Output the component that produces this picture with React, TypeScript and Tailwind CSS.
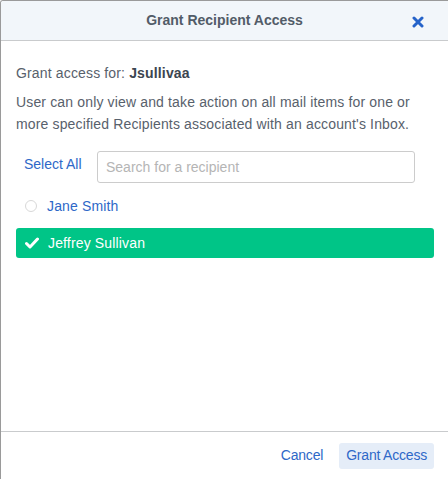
import React from "react";

export default function App() {
  return (
    <div
      className="w-[448px] h-[479px] bg-white border-l border-t border-[#9a9a9a] rounded-tl-[3px] flex flex-col overflow-hidden"
      style={{ fontFamily: '"Liberation Sans", Arial, sans-serif' }}
    >
      <div className="h-[40px] shrink-0 bg-[#f2f6fa] border-b border-[#c9cbcd] relative flex items-center justify-center">
        <span className="text-[14px] font-bold text-[#525c68]">Grant Recipient Access</span>
        <svg
          className="absolute left-[411px] top-[15px]"
          width="12"
          height="12"
          viewBox="0 0 12 12"
        >
          <path d="M2 2 L10 10 M10 2 L2 10" stroke="#2663c9" strokeWidth="3" strokeLinecap="round" />
        </svg>
      </div>
      <div className="flex-1 px-[15px] pt-[23px] text-[14px] text-[#58616c] tracking-[0.15px]">
        <div className="leading-[18px]">
          Grant access for: <span className="font-bold text-[#3c4550]">Jsullivaa</span>
        </div>
        <div className="mt-[9px] leading-[22px]">
          User can only view and take action on all mail items for one or more specified Recipients associated with an account's Inbox.
        </div>
        <div className="mt-[16px] flex items-center tracking-normal">
          <span className="ml-[8px] w-[73px] text-[#2e68c8] leading-[18px] -mt-[6px]">Select All</span>
          <div className="w-[318px] h-[32px] border border-[#cccccc] rounded-[3px] flex items-center px-[8px] text-[#b5b5b5]">
            Search for a recipient
          </div>
        </div>
        <div className="mt-[14px] h-[18px] flex items-center">
          <span className="ml-[9px] w-[12px] h-[12px] rounded-full border border-[#d8d8d8]"></span>
          <span className="ml-[10px] text-[#2e68c8]">Jane Smith</span>
        </div>
        <div className="mt-[13px] h-[30px] w-[418px] bg-[#00c587] rounded-[3px] flex items-center">
          <svg className="ml-[9px]" width="14" height="12" viewBox="0 0 14 12">
            <path d="M1.5 6.5 L5 10 L12.5 2" stroke="white" strokeWidth="3" fill="none" strokeLinecap="round" strokeLinejoin="round" />
          </svg>
          <span className="ml-[9px] text-white">Jeffrey Sullivan</span>
        </div>
      </div>
      <div className="h-[48px] shrink-0 border-t border-[#c9cbcd] flex items-center justify-end pr-[14px]">
        <span className="text-[14px] text-[#2e68c8] mr-[16px] tracking-[-0.2px]">Cancel</span>
        <div className="h-[26px] px-[7px] bg-[#e5edf8] rounded-[3px] flex items-center text-[14px] text-[#2e68c8] tracking-[-0.2px]">
          Grant Access
        </div>
      </div>
    </div>
  );
}
